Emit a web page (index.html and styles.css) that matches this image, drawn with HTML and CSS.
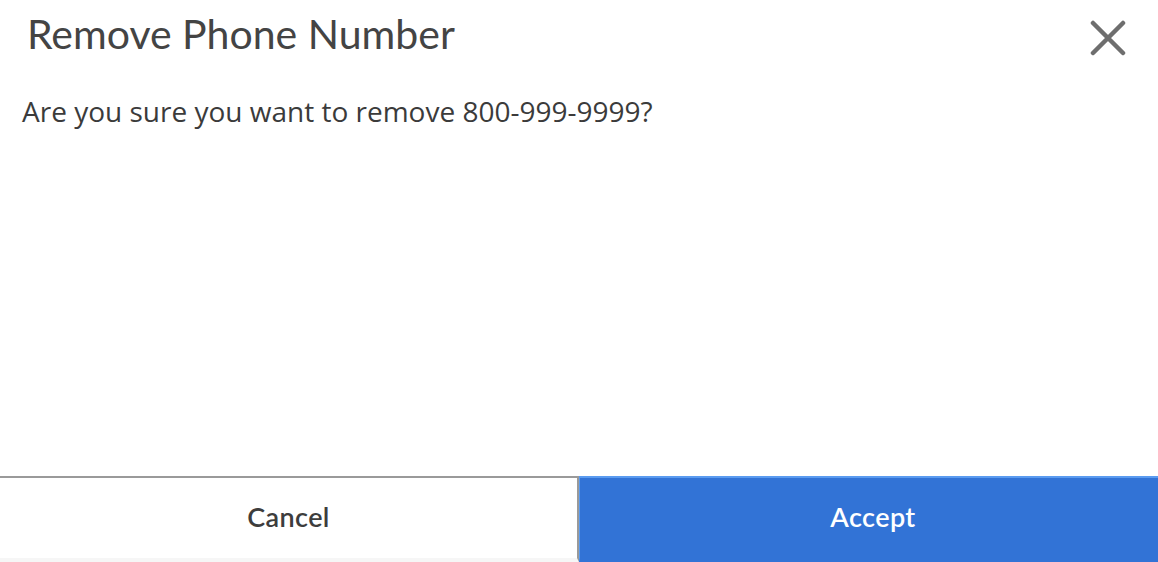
FILE: index.html
```html
<!DOCTYPE html>
<html>
<head>
<meta charset="utf-8">
<link rel="stylesheet" href="styles.css">
</head>
<body>
<div class="modal">
  <header class="modal-header">
    <h1 class="modal-title">Remove Phone Number</h1>
    <button class="close-btn" aria-label="Close">
      <svg width="36" height="36" viewBox="0 0 36 36"><path d="M3 3 L33 33 M33 3 L3 33" stroke="#6e6e6e" stroke-width="4.5" stroke-linecap="round" fill="none"/></svg>
    </button>
  </header>
  <div class="modal-body">
    <p class="message">Are you sure you want to remove 800-999-9999?</p>
  </div>
  <footer class="modal-footer">
    <button class="btn btn-cancel">Cancel</button>
    <button class="btn btn-accept">Accept</button>
  </footer>
</div>
</body>
</html>
```

FILE: styles.css
```css
html, body {
  margin: 0;
  padding: 0;
  background: #ffffff;
}
.modal {
  height: 562px;
  display: flex;
  flex-direction: column;
}
.modal-header {
  display: flex;
  justify-content: space-between;
  align-items: flex-start;
  padding: 10px 32px 0 27px;
}
.modal-title {
  margin: 0;
  font-family: "Lato", sans-serif;
  font-weight: 400;
  font-size: 41px;
  line-height: 48px;
  color: #444444;
}
.close-btn {
  border: none;
  background: none;
  padding: 0;
  margin-top: 10px;
  width: 36px;
  height: 36px;
  cursor: pointer;
}
.close-btn svg { display: block; }
.modal-body {
  flex: 1;
  padding: 0 22px;
}
.message {
  margin: 34px 0 0;
  font-family: "Open Sans", sans-serif;
  font-size: 28px;
  line-height: 38px;
  color: #3b3b3b;
}
.modal-footer {
  display: flex;
  height: 86px;
}
.btn {
  flex: none;
  width: 50%;
  box-sizing: border-box;
  border: none;
  margin: 0;
  padding: 0 0 3px;
  font-family: "Lato", sans-serif;
  font-weight: 600;
  font-size: 27px;
  letter-spacing: 0.4px;
  cursor: pointer;
}
.btn-cancel {
  background: #ffffff;
  color: #3d3d3d;
  border-top: 2px solid #9a9a9a;
  border-right: 2px solid #9a9a9a;
  border-bottom: 4px solid #f6f6f6;
}
.btn-accept {
  background: #3273d6;
  color: #ffffff;
  border-top: 2px solid #5a9bf0;
  border-left: 1px solid #5a9bf0;
  border-bottom: 4px solid #3273d6;
  text-indent: 8px;
}
```
